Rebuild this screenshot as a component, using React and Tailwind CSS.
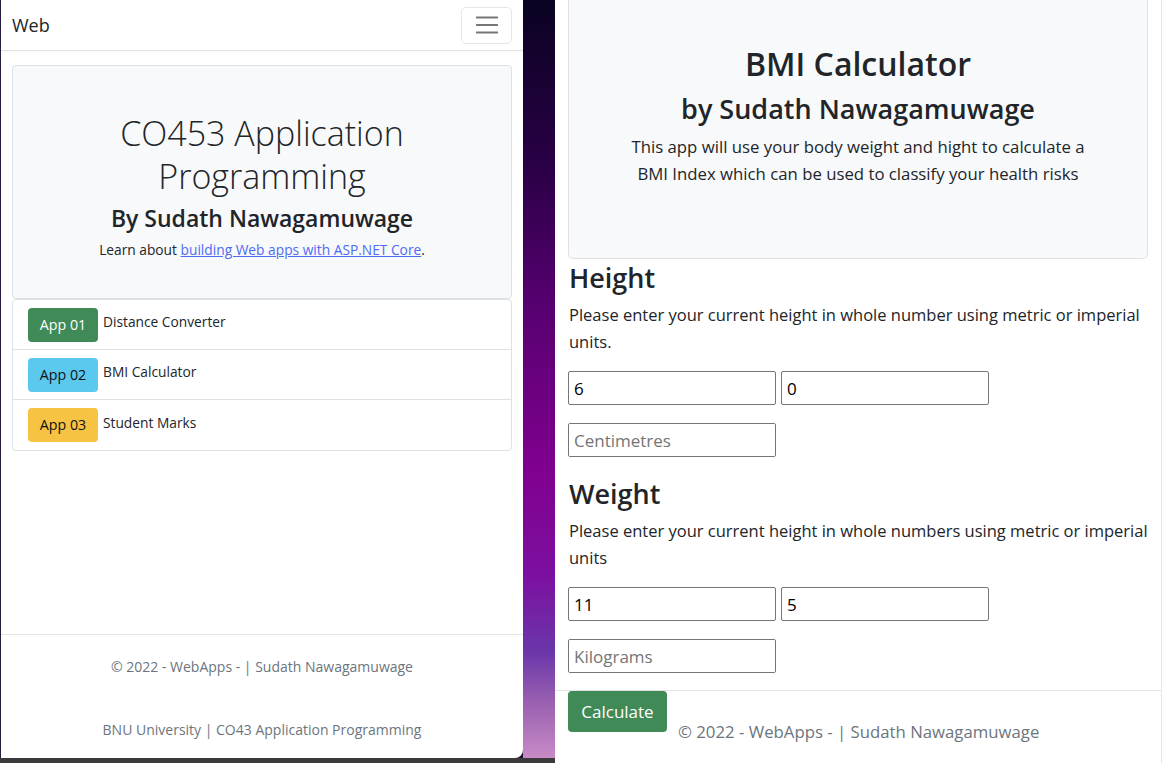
import React from "react";

const apps = [
  { id: "App 01", name: "Distance Converter", cls: "bg-[#3f8a57] text-white" },
  { id: "App 02", name: "BMI Calculator", cls: "bg-[#5bc8ee] text-[#111]" },
  { id: "App 03", name: "Student Marks", cls: "bg-[#f6c343] text-[#111]" },
];

const Toggler = () => (
  <button className="w-[51px] h-[37px] border border-[#e6e6e6] rounded-[5px] flex items-center justify-center">
    <svg width="28" height="28" viewBox="0 0 30 30">
      <path d="M4 7h22M4 15h22M4 23h22" stroke="#777" strokeWidth="2" strokeLinecap="round" />
    </svg>
  </button>
);

const LeftWindow = () => (
  <div className="w-[523px] h-[758px] bg-white border-l border-[#2b1d3f] rounded-br-[8px] flex flex-col overflow-hidden text-[#212529]">
    <nav className="h-[51px] shrink-0 border-b border-[#e3e3e3] shadow-[0_1px_3px_rgba(0,0,0,0.04)] flex items-center justify-between pl-[11px] pr-[11px]">
      <span className="text-[18px]">Web</span>
      <Toggler />
    </nav>

    <main className="px-[11px] pt-[14px]">
      <div className="h-[234px] bg-[#f8f9fa] border border-[#dee2e6] rounded-[4px] flex flex-col items-center pt-[46px] text-center">
        <h1 className="text-[34px] font-light leading-[43px] w-[320px]">CO453 Application Programming</h1>
        <h2 className="text-[23px] font-semibold leading-[29px] mt-[6px]">By Sudath Nawagamuwage</h2>
        <p className="text-[13.75px] leading-[21px] mt-[6px]">
          Learn about{" "}
          <a href="#" className="text-[#4f6bf6] underline">building Web apps with ASP.NET Core</a>.
        </p>
      </div>

      <ul className="border border-[#dee2e6] rounded-[4px] divide-y divide-[#dee2e6]">
        {apps.map((a) => (
          <li key={a.id} className="h-[50px] flex items-center px-[15px] gap-[5px]">
            <span className={`w-[70px] h-[34px] rounded-[4px] flex items-center justify-center text-[14.25px] ${a.cls}`}>
              {a.id}
            </span>
            <span className="text-[13.75px] mb-[4px]">{a.name}</span>
          </li>
        ))}
      </ul>
    </main>

    <footer className="mt-auto h-[124px] shrink-0 border-t border-[#e5e5e5] text-[#6c757d] text-[14px] text-center">
      <p className="mt-[21px] leading-[21px]">© 2022 - WebApps - | Sudath Nawagamuwage</p>
      <p className="mt-[42px] leading-[21px]">BNU University | CO43 Application Programming</p>
    </footer>
  </div>
);

const Field = ({ value, placeholder }) => (
  <input
    readOnly
    defaultValue={value}
    placeholder={placeholder}
    className="w-[208px] h-[34px] border border-[#767676] rounded-[2px] px-[5px] text-[17px] text-black placeholder:text-[#757575] bg-white outline-none"
  />
);

const Section = ({ title, text, a, b, unit }) => (
  <section>
    <h3 className="text-[27px] font-semibold leading-[34px] pl-[1px]">{title}</h3>
    <p className="mt-[6px] text-[16.5px] leading-[27px] pl-[1px]">{text}</p>
    <div className="mt-[16px] flex gap-[5px]">
      <Field value={a} />
      <Field value={b} />
    </div>
    <div className="mt-[18px]">
      <Field placeholder={unit} />
    </div>
  </section>
);

const RightWindow = () => (
  <div className="flex-1 h-[763px] bg-white border-r border-[#e6e6e6] flex flex-col text-[#212529]">
    <div className="px-[13px]">
      <div className="h-[259px] bg-[#f8f9fa] border-x border-b border-[#dee2e6] rounded-b-[5px] flex flex-col items-center pt-[43px] text-center">
        <h1 className="text-[32px] font-semibold leading-[41px]">BMI Calculator</h1>
        <h2 className="text-[27px] font-semibold leading-[34px] mt-[8px]">by Sudath Nawagamuwage</h2>
        <p className="text-[16.75px] leading-[27px] mt-[7px]">
          This app will use your body weight and hight to calculate a
          <br />
          BMI Index which can be used to classify your health risks
        </p>
      </div>

      <div className="mt-[2px]">
        <Section
          title="Height"
          text="Please enter your current height in whole number using metric or imperial units."
          a="6"
          b="0"
          unit="Centimetres"
        />
      </div>
      <div className="mt-[20px]">
        <Section
          title="Weight"
          text="Please enter your current height in whole numbers using metric or imperial units"
          a="11"
          b="5"
          unit="Kilograms"
        />
      </div>
    </div>

    <footer className="mt-[17px] border-t border-[#e2e2e2] px-[13px] flex items-start gap-[11px]">
      <button className="w-[99px] h-[41px] bg-[#3f8a57] text-white text-[17px] rounded-[4px]">Calculate</button>
      <span className="mt-[27px] text-[16.75px] leading-[27px] text-[#6c757d]">© 2022 - WebApps - | Sudath Nawagamuwage</span>
    </footer>
  </div>
);

export default function App() {
  return (
    <div className="w-[1162px] h-[763px] overflow-hidden flex bg-[#1a1030] font-['Open_Sans',sans-serif]">
      <div className="w-[555px] flex flex-col">
        <div className="flex h-[758px]">
          <LeftWindow />
          <div className="flex-1 bg-[linear-gradient(180deg,#0a0322_0%,#2a0046_22%,#560070_40%,#80008f_62%,#7c10a0_76%,#6a36a9_86%,#9c62b2_93%,#c88ac6_100%)]" />
        </div>
        <div className="flex-1 bg-[#3a3a3a]" />
      </div>
      <RightWindow />
    </div>
  );
}
